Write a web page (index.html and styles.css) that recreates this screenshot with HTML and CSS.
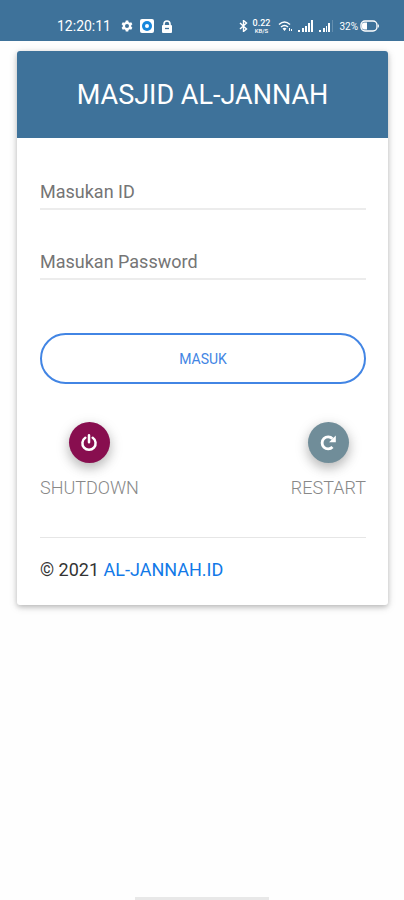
FILE: index.html
```html
<!DOCTYPE html>
<html lang="id">
<head>
<meta charset="utf-8">
<meta name="viewport" content="width=device-width, initial-scale=1">
<title>MASJID AL-JANNAH</title>
<link rel="stylesheet" href="styles.css">
</head>
<body>
<header class="status">
  <div class="status-group">
    <time class="clock">12:20:11</time>
    <svg class="gear" width="12" height="12" viewBox="0 0 24 24" aria-hidden="true"><path fill="currentColor" fill-rule="evenodd" d="M9.500 1h5l.6 3 2.300 1.300 3-1 2.400 4.300-2.300 2v2.800l2.300 2-2.400 4.300-3-1-2.300 1.300-.6 3h-5l-.6-3-2.300-1.300-3 1-2.400-4.300 2.300-2v-2.800l-2.300-2 2.400-4.300 3 1L8.900 4zM12 8a4 4 0 1 0 0 8 4 4 0 0 0 0-8z"/></svg>
    <svg width="14" height="14" viewBox="0 0 14 14" aria-hidden="true"><rect width="14" height="14" rx="2" fill="#fff"/><circle cx="7" cy="7" r="5" fill="#1787dc"/><circle cx="7" cy="7" r="2" fill="#fff"/></svg>
    <svg width="12" height="13" viewBox="0 0 12 13" aria-hidden="true"><path d="M3 6V4a3 3 0 0 1 6 0v2" fill="none" stroke="currentColor" stroke-width="1.600"/><rect x="1" y="5" width="10" height="8" rx="1" fill="currentColor"/><path d="M4 8.500h4" stroke="#3e729a" stroke-width="1.300"/></svg>
  </div>
  <div class="status-group status-right">
    <svg width="9" height="12" viewBox="0 0 9 12" aria-hidden="true"><path d="M1 3l6.500 6-3 2.500v-11l3 2.500L1 9" fill="none" stroke="currentColor" stroke-width="1.400"/></svg>
    <div class="speed"><span>0.22</span><span class="unit">KB/S</span></div>
    <svg width="15" height="12" viewBox="0 0 15 12" aria-hidden="true"><g fill="none" stroke="currentColor" stroke-width="1.500"><path d="M1 4.500q5.500-5 11 0M3 7q3.500-3 7 0"/></g><path d="M4.500 8.500q2-1.500 4 0l-2 2.500zM11 8h1v3h-1zM13 9h1v2h-1z" fill="currentColor"/></svg>
    <svg width="16" height="12" viewBox="0 0 16 12" aria-hidden="true"><path fill="currentColor" d="M0 10h2v2H0zM4 8h2v4H4zM7 6h2v6H7zM10 3h2v9h-2zM13 0h2v12h-2z"/></svg>
    <svg width="15" height="12" viewBox="0 0 15 12" aria-hidden="true"><path fill="currentColor" d="M0 10h2v2H0zM4 8h2v4H4zM7 6h1v6H7zM9 3h2v9H9z"/><path fill="currentColor" opacity=".2" d="M13 0h1v12h-1z"/></svg>
    <span class="percent">32%</span>
    <svg width="20" height="12" viewBox="0 0 20 12" aria-hidden="true"><rect x="1" y="1" width="16" height="10" rx="4" fill="none" stroke="currentColor" stroke-width="1.400"/><path d="M4 2.500h3v7H4a2 2 0 0 1-2-2v-3a2 2 0 0 1 2-2zM18 4q2 2 0 4z" fill="currentColor"/></svg>
  </div>
</header>

<main class="card">
  <h1 class="card-title">MASJID AL-JANNAH</h1>
  <div class="card-body">
    <form class="login">
      <input class="field" type="text" placeholder="Masukan ID" aria-label="Masukan ID">
      <input class="field" type="password" placeholder="Masukan Password" aria-label="Masukan Password">
      <button class="submit" type="button">MASUK</button>
    </form>
    <div class="actions">
      <div class="action">
        <button class="round shutdown" type="button" aria-labelledby="shutdown-label">
          <svg width="18" height="18" viewBox="0 0 18 18" aria-hidden="true"><path d="M5.300 3.800a6.600 6.600 0 1 0 7.400 0M9 1.300v7" fill="none" stroke="currentColor" stroke-width="2.500" stroke-linecap="round"/></svg>
        </button>
        <span id="shutdown-label">SHUTDOWN</span>
      </div>
      <div class="action">
        <button class="round restart" type="button" aria-labelledby="restart-label">
          <svg width="18" height="18" viewBox="0 0 18 18" aria-hidden="true"><path d="M13.500 13a6 6 0 1 1 0-8.200" fill="none" stroke="currentColor" stroke-width="2.800"/><path d="M16.800 1.500v6.700h-6.700z" fill="currentColor"/></svg>
        </button>
        <span id="restart-label">RESTART</span>
      </div>
    </div>
    <footer class="footer">© 2021 <a href="#">AL-JANNAH.ID</a></footer>
  </div>
</main>
<div class="home-bar"></div>
</body>
</html>
```
FILE: styles.css
```css
* {
  box-sizing: border-box;
}

body {
  display: flex;
  flex-direction: column;
  min-height: 100vh;
  margin: 0;
  background: #fefefe;
  color: #333;
  font-family: Roboto, sans-serif;
  font-size: 18px;
}

.status {
  display: flex;
  justify-content: space-between;
  padding: 16px 24px 5px 57px;
  background: #3e729a;
  color: #fff;
}

.status-group {
  display: flex;
  align-items: center;
  gap: 7px;
  height: 20px;
}

.status-right {
  gap: 5px;
}

.clock {
  margin-right: 3px;
  font-size: 14px;
}

.speed {
  display: flex;
  flex-direction: column;
  margin-right: 3px;
  font-size: 9px;
  font-weight: 500;
  line-height: 8px;
  text-align: center;
}

.unit {
  font-size: 6px;
  line-height: 7px;
}

.percent {
  margin-right: -3px;
  font-size: 10px;
}

.card {
  margin: 10px 16px 0 17px;
  overflow: hidden;
  border-radius: 3px;
  background: #fff;
  box-shadow: 0 2px 5px rgba(0, 0, 0, .2), 0 2px 10px rgba(0, 0, 0, .12);
}

.card-title {
  margin: 0;
  padding: 28px 16px 27px;
  background: #3e729a;
  color: #fff;
  font-size: 27px;
  font-weight: 400;
  line-height: 32px;
  text-align: center;
}

.card-body {
  padding: 36px 22px 23px 23px;
}

.login {
  display: flex;
  flex-direction: column;
}

.field {
  width: 100%;
  height: 36px;
  margin: 0 0 34px;
  padding: 0;
  border: 0;
  border-bottom: 2px solid #ececec;
  border-radius: 0;
  outline: 0;
  background: transparent;
  color: #333;
  font: inherit;
}

.field::placeholder {
  color: #757575;
  opacity: 1;
}

.submit {
  height: 51px;
  margin-top: 19px;
  border: 2px solid #4285e4;
  border-radius: 26px;
  background: transparent;
  color: #4285e4;
  font: inherit;
  font-size: 14px;
}

.actions {
  display: flex;
  justify-content: space-between;
  margin-top: 38px;
  padding-bottom: 38px;
  border-bottom: 1px solid #e6e6e6;
}

.action {
  display: flex;
  flex-direction: column;
  align-items: center;
  gap: 14px;
  color: #888;
  font-weight: 300;
  line-height: 22px;
}

.round {
  display: grid;
  place-items: center;
  width: 41px;
  height: 41px;
  padding: 0;
  border: 0;
  border-radius: 50%;
  color: #fff;
  box-shadow: 0 5px 11px rgba(0, 0, 0, .18), 0 4px 15px rgba(0, 0, 0, .15);
}

.shutdown {
  background: #880e4f;
}

.restart {
  background: #708d99;
}

.footer {
  margin-top: 20px;
  line-height: 24px;
}

.footer a {
  color: #1279e8;
  text-decoration: none;
}

.home-bar {
  width: 134px;
  height: 3px;
  margin: auto auto 0;
  background: #e8e8e8;
}
```
